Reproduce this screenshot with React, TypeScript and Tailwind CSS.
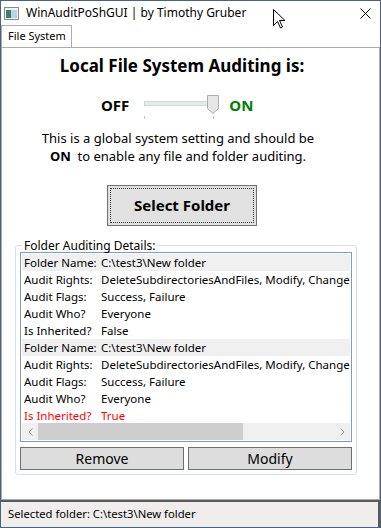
import React from 'react';

type Entry = {
  name: string;
  rights: string;
  flags: string;
  who: string;
  inherited: string;
};

const entries: Entry[] = [
  {
    name: 'C:\\test3\\New folder',
    rights: 'DeleteSubdirectoriesAndFiles, Modify, ChangePermissions, TakeOwnership',
    flags: 'Success, Failure',
    who: 'Everyone',
    inherited: 'False',
  },
  {
    name: 'C:\\test3\\New folder',
    rights: 'DeleteSubdirectoriesAndFiles, Modify, ChangePermissions, TakeOwnership',
    flags: 'Success, Failure',
    who: 'Everyone',
    inherited: 'True',
  },
];

function Row({ label, value, shaded, red }: { label: string; value: string; shaded?: boolean; red?: boolean }) {
  return (
    <div
      className={`flex h-[17px] items-center whitespace-nowrap text-[11.5px] leading-[17px] ${
        shaded ? 'bg-[#f0f0f0]' : ''
      } ${red ? 'text-[#ff0000]' : 'text-black'}`}
    >
      <span className="w-[79px] shrink-0 pl-[2px]">{label}</span>
      <span>{value}</span>
    </div>
  );
}

function Slider() {
  // trackbar drawing: track, thumb on the right, two ticks
  return (
    <svg width="78" height="26" viewBox="0 0 78 26">
      <rect x="0.5" y="7.5" width="74" height="4" fill="#e7eaea" stroke="#d6d6d6" />
      <path d="M63.5 1.5 H74.5 V14.5 L69 19.5 L63.5 14.5 Z" fill="#e6e6e6" stroke="#adadad" />
      <rect x="0" y="22" width="1" height="3" fill="#c4c4c4" />
      <rect x="69" y="22" width="1" height="3" fill="#c4c4c4" />
    </svg>
  );
}

export default function App() {
  return (
    <div className="relative flex h-[528px] w-[381px] flex-col border border-[#4a6378] bg-white font-['Noto_Sans',sans-serif] text-black">
      {/* title bar */}
      <div className="flex h-[24px] shrink-0 items-center">
        <svg className="ml-[3px]" width="15" height="13" viewBox="0 0 15 13">
          <rect x="0.5" y="0.5" width="14" height="12" fill="#f4f4f4" stroke="#8a8a8a" />
          <rect x="2" y="3" width="5" height="8" fill="#3f7f67" />
          <rect x="7" y="3" width="6" height="8" fill="#b8d4e6" />
        </svg>
        <span className="ml-[7px] text-[12px] leading-[16px]">WinAuditPoShGUI | by Timothy Gruber</span>
        <svg className="ml-auto mr-[9px]" width="11" height="11" viewBox="0 0 11 11">
          <path d="M0.5 0.5 L10.5 10.5 M10.5 0.5 L0.5 10.5" stroke="#000" strokeWidth="1" />
        </svg>
      </div>

      {/* tab strip */}
      <div className="flex h-[22px] shrink-0 items-end">
        <div className="flex h-[22px] w-[71px] items-center border border-b-0 border-[#acacac] bg-white pl-[6px] text-[11px]">
          File System
        </div>
      </div>

      {/* tab content */}
      <div className="flex flex-1 flex-col border border-[#acacac] bg-white">
        <div className="flex w-[360px] flex-col items-center">
          <h1 className="mt-[6px] text-[17px] font-bold leading-[24px]">Local File System Auditing is:</h1>

          <div className="mt-[14px] flex h-[26px] items-center self-start pl-[99px]">
            <span className="text-[15px] font-bold leading-[20px]">OFF</span>
            <div className="ml-[15px] mt-[4px]">
              <Slider />
            </div>
            <span className="ml-[7px] text-[15px] font-bold leading-[20px] text-[#008000]">ON</span>
          </div>

          <p className="mr-[8px] mt-[11px] text-center text-[13px] leading-[18px]">
            This is a global system setting and should be
            <br />
            <b>ON</b>&nbsp; to enable any file and folder auditing.
          </p>

          <button className="mt-[20px] flex h-[41px] w-[150px] items-center justify-center border border-[#707070] bg-[#e1e1e1] p-[2px]">
            <span className="flex h-full w-full items-center justify-center border border-dotted border-[#333] text-[15px] font-bold">
              Select Folder
            </span>
          </button>
        </div>

        <fieldset className="ml-[13px] mt-[13px] w-[342px] rounded-[3px] border border-[#d5dfe5] px-[4px] pb-[4px]">
          <legend className="ml-[2px] px-[2px] text-[12px] leading-[13px]">Folder Auditing Details:</legend>

          <div className="flex h-[190px] w-[332px] flex-col border border-[#7f9db9] p-[1px]">
            <div className="h-[170px] overflow-hidden">
              {entries.map((e, i) => (
                <div key={i}>
                  <Row label="Folder Name:" value={e.name} shaded />
                  <Row label="Audit Rights:" value={e.rights} />
                  <Row label="Audit Flags:" value={e.flags} />
                  <Row label="Audit Who?" value={e.who} />
                  <Row label="Is Inherited?" value={e.inherited} red={e.inherited === 'True'} />
                </div>
              ))}
            </div>
            {/* horizontal scrollbar */}
            <div className="flex h-[17px] bg-[#f0f0f0]">
              <div className="flex w-[16px] items-center justify-center">
                <svg width="5" height="8" viewBox="0 0 5 8">
                  <path d="M4.5 0.5 L1 4 L4.5 7.5" fill="none" stroke="#a3a3a3" />
                </svg>
              </div>
              <div className="w-[205px] bg-[#cdcdcd]" />
              <div className="ml-auto flex w-[16px] items-center justify-center">
                <svg width="5" height="8" viewBox="0 0 5 8">
                  <path d="M0.5 0.5 L4 4 L0.5 7.5" fill="none" stroke="#a3a3a3" />
                </svg>
              </div>
            </div>
          </div>

          <div className="mt-[5px] flex gap-[4px]">
            <button className="h-[23px] w-[164px] border border-[#707070] bg-[#dddddd] text-[14px] leading-[20px]">
              Remove
            </button>
            <button className="h-[23px] w-[164px] border border-[#707070] bg-[#dddddd] text-[14px] leading-[20px]">
              Modify
            </button>
          </div>
        </fieldset>
      </div>

      {/* status bar */}
      <div className="flex h-[27px] shrink-0 items-center border-r-2 border-t-2 border-[#5a5a5a] bg-[#f0eded] pl-[7px] text-[11.25px]">
        Selected folder: C:\test3\New folder
      </div>

      {/* mouse pointer over the title bar */}
      <svg className="absolute left-[272px] top-[8px]" width="13" height="20" viewBox="0 0 13 20">
        <path d="M0.5 0.5 V16.5 L4.5 12.5 L7.5 19 L9.5 18 L6.5 11.5 H12 Z" fill="#fff" stroke="#000" strokeWidth="1" strokeLinejoin="round" />
      </svg>
    </div>
  );
}
